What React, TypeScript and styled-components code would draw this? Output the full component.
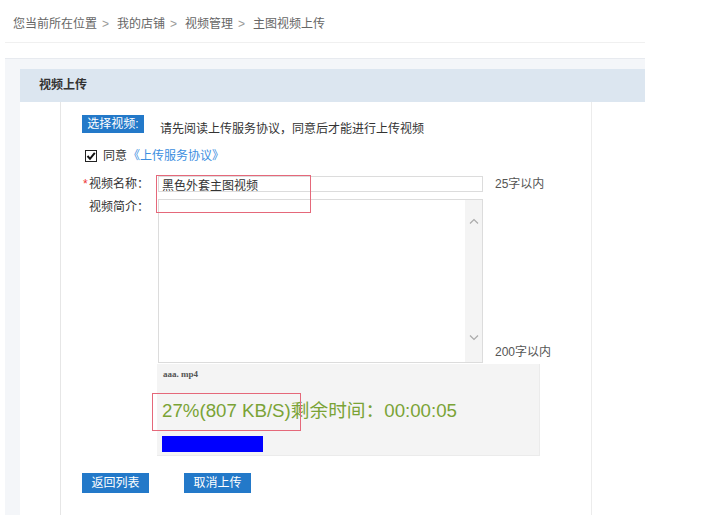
import React from 'react';
import styled, { createGlobalStyle } from 'styled-components';

const GlobalStyle = createGlobalStyle`
  html, body { margin: 0; padding: 0; background: #fff; }
  body {
    font-family: "Liberation Sans", "Noto Sans CJK SC", sans-serif;
    font-size: 12px;
    color: #333;
  }
  * { box-sizing: border-box; }
`;

const Page = styled.div`
  width: 712px;
  height: 520px;
  padding-left: 5px;
  overflow: hidden;
`;

const Frame = styled.div`
  width: 640px;
  height: 515px;
  display: flex;
  flex-direction: column;
`;

const Breadcrumb = styled.nav`
  height: 43px;
  padding: 17px 0 0 8px;
  border-bottom: 1px solid #f0f0f0;
  color: #666;
  line-height: 14px;
  display: flex;
`;

const Sep = styled.span`
  margin: 0 8px 0 5px;
  color: #999;
`;

const Panel = styled.section`
  margin-top: 15px;
  flex: 1;
  display: flex;
  flex-direction: column;
  border-top: 1px solid #e7eaef;
  background: #f4f6f9;
  padding: 10px 0 0 15px;
`;

const Card = styled.div`
  flex: 1;
  display: flex;
  flex-direction: column;
  background: #fff;
`;

const CardHeader = styled.h2`
  margin: 0;
  height: 33px;
  line-height: 33px;
  padding-left: 19px;
  background: #dce6f0;
  font-size: 12px;
  font-weight: bold;
  color: #333;
`;

const CardBody = styled.div`
  flex: 1;
  display: flex;
  padding-left: 40px;
`;

const Content = styled.div`
  width: 532px;
  border-left: 1px solid #e6e6e6;
  border-right: 1px solid #ececec;
  padding: 13px 0 0 21px;
  display: flex;
  flex-direction: column;
  position: relative;
`;

const SelectRow = styled.div`
  display: flex;
  align-items: flex-start;
  height: 18px;
`;

const BlueButton = styled.button<{ $w: number }>`
  width: ${p => p.$w}px;
  height: ${p => (p.$w === 62 ? 18 : 20)}px;
  padding: 0;
  border: none;
  background: #2379c9;
  color: #fff;
  font-family: "Liberation Sans", "Noto Sans CJK SC", sans-serif;
  font-size: 12px;
  line-height: ${p => (p.$w === 62 ? 18 : 20)}px;
  text-align: center;
  cursor: pointer;
`;

const Notice = styled.span`
  margin-left: 16px;
  padding-top: 7px;
  line-height: 14px;
  color: #333;
`;

const AgreeRow = styled.label`
  margin-top: 16px;
  display: flex;
  align-items: center;
  line-height: 14px;
  height: 14px;
`;

const CheckBox = styled.span`
  width: 12px;
  height: 12px;
  margin-left: 3px;
  border: 1px solid #222;
  background: #fff;
  display: inline-flex;
  align-items: center;
  justify-content: center;
`;

const AgreeText = styled.span`
  margin-left: 6px;
  color: #333;
`;

const Link = styled.a`
  color: #3b8ee0;
  text-decoration: none;
  margin-left: 1px;
`;

const FieldRow = styled.div<{ $gap: number }>`
  margin-top: ${p => p.$gap}px;
  display: flex;
  align-items: flex-start;
`;

const Label = styled.span`
  width: 76px;
  line-height: 16px;
  color: #333;
`;

const Star = styled.span`
  color: #e33;
  display: inline-block;
  width: 7px;
  padding-left: 1px;
`;

const InputWrap = styled.div`
  position: relative;
`;

const TextInput = styled.input`
  width: 325px;
  height: 16px;
  border: 1px solid #dcdcdc;
  padding: 0 3px;
  margin: 0;
  font-family: "Liberation Sans", "Noto Sans CJK SC", sans-serif;
  font-size: 12px;
  line-height: 14px;
  color: #333;
  outline: none;
  display: block;
`;

const Annotation = styled.div<{ $l: number; $t: number; $w: number; $h: number }>`
  position: absolute;
  left: ${p => p.$l}px;
  top: ${p => p.$t}px;
  width: ${p => p.$w}px;
  height: ${p => p.$h}px;
  border: 1px solid #e5687a;
  pointer-events: none;
`;

const Hint = styled.span<{ $bottom?: boolean }>`
  margin-left: 12px;
  line-height: 16px;
  color: #555;
  align-self: ${p => (p.$bottom ? 'flex-end' : 'flex-start')};
  margin-bottom: ${p => (p.$bottom ? 3 : 0)}px;
`;

const AreaBox = styled.div`
  width: 325px;
  height: 164px;
  border: 1px solid #dcdcdc;
  display: flex;
`;

const TextArea = styled.textarea`
  flex: 1;
  border: none;
  resize: none;
  outline: none;
  padding: 2px 3px;
  margin: 0;
  font-family: "Liberation Sans", "Noto Sans CJK SC", sans-serif;
  font-size: 12px;
  overflow: hidden;
`;

const ScrollTrack = styled.div`
  width: 17px;
  background: #f4f4f4;
  display: flex;
  flex-direction: column;
  align-items: center;
  justify-content: space-between;
  padding: 18px 0 21px;
`;

const ProgressBox = styled.div`
  position: relative;
  margin: 1px 0 0 75px;
  width: 383px;
  height: 92px;
  background: #f4f4f4;
  border-right: 1px solid #ebebeb;
  border-bottom: 1px solid #ebebeb;
  padding: 5px 0 0 5px;
  display: flex;
  flex-direction: column;
`;

const FileName = styled.div`
  padding-left: 1px;
  font-family: "Liberation Serif", "Noto Sans CJK SC", serif;
  font-size: 9px;
  font-weight: bold;
  line-height: 10px;
  color: #555;
`;

const Speed = styled.div`
  margin-top: 21px;
  font-family: "Liberation Sans", "Noto Sans CJK SC", sans-serif;
  font-size: 18.7px;
  line-height: 22px;
  color: #7aa336;
  white-space: nowrap;
`;

const Bar = styled.div`
  margin-top: 14px;
  height: 16px;
  background: #0000ff;
`;

const ButtonRow = styled.div`
  margin-top: 17px;
  display: flex;
  gap: 35px;
`;

const Chevron = ({ up }: { up?: boolean }) => (
  <svg width="10" height="6" viewBox="0 0 10 6">
    <path
      d={up ? 'M1 5.5 L5 1.5 L9 5.5' : 'M1 0.5 L5 4.5 L9 0.5'}
      fill="none"
      stroke="#aaa"
      strokeWidth="1.2"
    />
  </svg>
);

export default function App() {
  const progress = 27;
  return (
    <Page>
      <GlobalStyle />
      <Frame>
        <Breadcrumb>
          <span>您当前所在位置</span>
          <Sep>&gt;</Sep>
          <span>我的店铺</span>
          <Sep>&gt;</Sep>
          <span>视频管理</span>
          <Sep>&gt;</Sep>
          <span>主图视频上传</span>
        </Breadcrumb>
        <Panel>
          <Card>
            <CardHeader>视频上传</CardHeader>
            <CardBody>
              <Content>
                <SelectRow>
                  <BlueButton $w={62}>选择视频:</BlueButton>
                  <Notice>请先阅读上传服务协议，同意后才能进行上传视频</Notice>
                </SelectRow>
                <AgreeRow>
                  <CheckBox>
                    <svg width="10" height="10" viewBox="0 0 10 10">
                      <path d="M1.5 5 L4 7.8 L8.8 1.8" fill="none" stroke="#111" strokeWidth="2" />
                    </svg>
                  </CheckBox>
                  <AgreeText>同意</AgreeText>
                  <Link href="#">《上传服务协议》</Link>
                </AgreeRow>
                <FieldRow $gap={13}>
                  <Label>
                    <Star>*</Star>视频名称：
                  </Label>
                  <InputWrap>
                    <TextInput defaultValue="黑色外套主图视频" />
                    <Annotation $l={-2} $t={-1} $w={155} $h={38} />
                  </InputWrap>
                  <Hint>25字以内</Hint>
                </FieldRow>
                <FieldRow $gap={7}>
                  <Label>
                    <Star />视频简介：
                  </Label>
                  <AreaBox>
                    <TextArea />
                    <ScrollTrack>
                      <Chevron up />
                      <Chevron />
                    </ScrollTrack>
                  </AreaBox>
                  <Hint $bottom>200字以内</Hint>
                </FieldRow>
                <ProgressBox>
                  <FileName>aaa. mp4</FileName>
                  <Speed>27%(807 KB/S)剩余时间：00:00:05</Speed>
                  <Bar style={{ width: `${(progress / 27) * 101}px` }} />
                  <Annotation $l={-5} $t={29} $w={149} $h={38} />
                </ProgressBox>
                <ButtonRow>
                  <BlueButton $w={67}>返回列表</BlueButton>
                  <BlueButton $w={67}>取消上传</BlueButton>
                </ButtonRow>
              </Content>
            </CardBody>
          </Card>
        </Panel>
      </Frame>
    </Page>
  );
}
